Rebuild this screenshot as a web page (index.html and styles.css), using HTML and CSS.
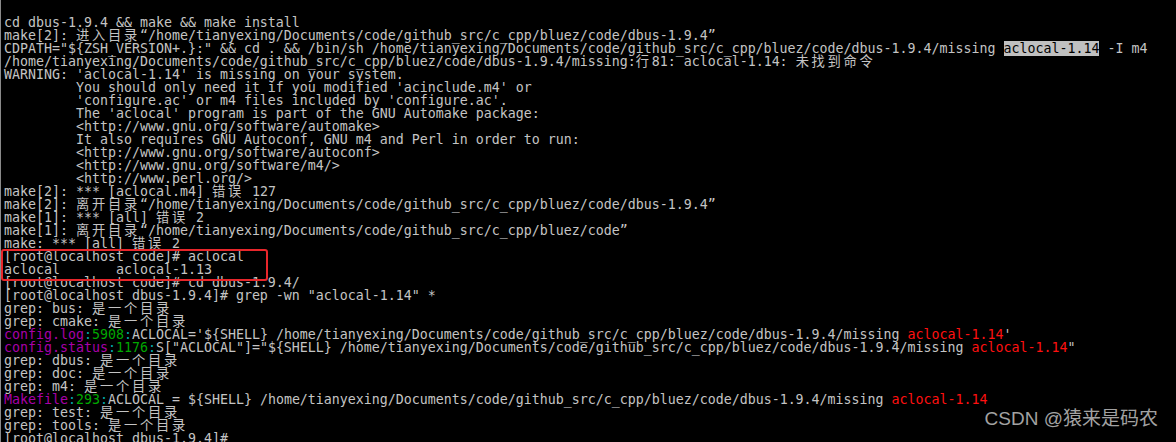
FILE: index.html
```html
<!DOCTYPE html>
<html lang="zh-CN">
<head>
<meta charset="utf-8">
<title>terminal</title>
<link rel="stylesheet" href="styles.css">
</head>
<body>
<div class="term">
<pre class="out"><div class="ln">cd dbus-1.9.4 &amp;&amp; make &amp;&amp; make install</div><div class="ln">make[2]: <span class="cj">进入目录</span>“/home/tianyexing/Documents/code/github_src/c_cpp/bluez/code/dbus-1.9.4”</div><div class="ln">CDPATH="${ZSH_VERSION+.}:" &amp;&amp; cd . &amp;&amp; /bin/sh /home/tianyexing/Documents/code/github_src/c_cpp/bluez/code/dbus-1.9.4/missing <span class="sel">aclocal-1.14</span> -I m4</div><div class="ln">/home/tianyexing/Documents/code/github_src/c_cpp/bluez/code/dbus-1.9.4/missing:<span class="cj">行</span>81: aclocal-1.14: <span class="cj">未找到命令</span></div><div class="ln">WARNING: 'aclocal-1.14' is missing on your system.</div><div class="ln">         You should only need it if you modified 'acinclude.m4' or</div><div class="ln">         'configure.ac' or m4 files included by 'configure.ac'.</div><div class="ln">         The 'aclocal' program is part of the GNU Automake package:</div><div class="ln">         &lt;http://www.gnu.org/software/automake&gt;</div><div class="ln">         It also requires GNU Autoconf, GNU m4 and Perl in order to run:</div><div class="ln">         &lt;http://www.gnu.org/software/autoconf&gt;</div><div class="ln">         &lt;http://www.gnu.org/software/m4/&gt;</div><div class="ln">         &lt;http://www.perl.org/&gt;</div><div class="ln">make[2]: *** [aclocal.m4] <span class="cj">错误</span> 127</div><div class="ln">make[2]: <span class="cj">离开目录</span>“/home/tianyexing/Documents/code/github_src/c_cpp/bluez/code/dbus-1.9.4”</div><div class="ln">make[1]: *** [all] <span class="cj">错误</span> 2</div><div class="ln">make[1]: <span class="cj">离开目录</span>“/home/tianyexing/Documents/code/github_src/c_cpp/bluez/code”</div><div class="ln">make: *** [all] <span class="cj">错误</span> 2</div><div class="ln">[root@localhost code]# aclocal</div><div class="ln">aclocal       aclocal-1.13</div><div class="ln">[root@localhost code]# cd dbus-1.9.4/</div><div class="ln">[root@localhost dbus-1.9.4]# grep -wn "aclocal-1.14" *</div><div class="ln">grep: bus: <span class="cj">是一个目录</span></div><div class="ln">grep: cmake: <span class="cj">是一个目录</span></div><div class="ln"><span class="fn">config.log</span><span class="sp">:</span><span class="no">5908</span><span class="sp">:</span>ACLOCAL='${SHELL} /home/tianyexing/Documents/code/github_src/c_cpp/bluez/code/dbus-1.9.4/missing <span class="mt">aclocal-1.14</span>'</div><div class="ln"><span class="fn">config.status</span><span class="sp">:</span><span class="no">1176</span><span class="sp">:</span>S["ACLOCAL"]="${SHELL} /home/tianyexing/Documents/code/github_src/c_cpp/bluez/code/dbus-1.9.4/missing <span class="mt">aclocal-1.14</span>"</div><div class="ln">grep: dbus: <span class="cj">是一个目录</span></div><div class="ln">grep: doc: <span class="cj">是一个目录</span></div><div class="ln">grep: m4: <span class="cj">是一个目录</span></div><div class="ln"><span class="fn">Makefile</span><span class="sp">:</span><span class="no">293</span><span class="sp">:</span>ACLOCAL = ${SHELL} /home/tianyexing/Documents/code/github_src/c_cpp/bluez/code/dbus-1.9.4/missing <span class="mt">aclocal-1.14</span></div><div class="ln">grep: test: <span class="cj">是一个目录</span></div><div class="ln">grep: tools: <span class="cj">是一个目录</span></div><div class="ln">[root@localhost dbus-1.9.4]#</div></pre>
<div class="mark"></div>
<div class="wm">CSDN @猿来是码农</div>
</div>
</body>
</html>
```

FILE: styles.css
```css
html, body {
  margin: 0;
  padding: 0;
  background: #000;
}

.term {
  position: relative;
  width: 1176px;
  height: 442px;
  overflow: hidden;
  background: #000;
  box-sizing: border-box;
  border-left: 1px solid #8a8a8a;
}

.out {
  margin: 0;
  padding: 16px 0 0 3px;
  font-family: "DejaVu Sans Mono", "Noto Sans CJK SC", monospace;
  font-size: 13.29px;
  line-height: 13px;
  color: #c4c4c4;
  white-space: pre;
}

.ln {
  height: 13px;
}

.cj {
  font-family: "Noto Sans CJK SC", sans-serif;
  letter-spacing: 2.71px;
  line-height: 10px;
}

.sel {
  background: #c0c0c0;
  color: #000;
}

.fn { color: #a800a8; }
.sp { color: #00a8a8; }
.no { color: #00a800; }
.mt { color: #ff1010; }

.mark {
  position: absolute;
  left: 0;
  top: 249px;
  width: 267px;
  height: 32px;
  box-sizing: border-box;
  border: 2px solid #e8262b;
  border-radius: 3px;
}

.wm {
  position: absolute;
  right: 18px;
  top: 407px;
  font-family: "Liberation Sans", "Noto Sans CJK SC", sans-serif;
  font-size: 19px;
  line-height: 24px;
  color: #a2a2a2;
}
```
